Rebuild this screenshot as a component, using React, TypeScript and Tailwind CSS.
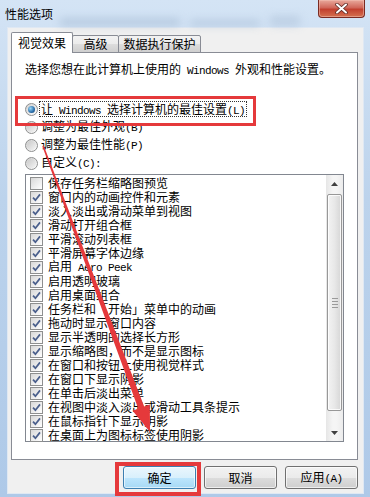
import React from "react";

const M = ({ children }: { children: React.ReactNode }) => (
  <span className="font-['Liberation_Mono',monospace] text-[11px] tracking-[-0.6px]">{children}</span>
);

const Radio = ({ checked }: { checked?: boolean }) => (
  <span className="w-[13px] h-[13px] rounded-full border border-[#8e8f8f] bg-[linear-gradient(135deg,#d0d0d0,#fdfdfd)] flex items-center justify-center shrink-0">
    {checked ? (
      <span className="w-[7px] h-[7px] rounded-full bg-[radial-gradient(circle_at_35%_35%,#9ad8f8,#2a6eaa_60%,#123a66)]" />
    ) : (
      <span className="w-[9px] h-[9px] rounded-full bg-[linear-gradient(135deg,#c9c9c9,#f4f4f4)]" />
    )}
  </span>
);

const Check = ({ checked }: { checked?: boolean }) => (
  <span className="w-[13px] h-[13px] border border-[#8e8f8f] bg-[linear-gradient(135deg,#d8d8d8,#ffffff)] shrink-0 flex items-center justify-center">
    {checked && (
      <svg width="9" height="9" viewBox="0 0 9 9">
        <path d="M1 4.6 L3.4 7.2 L8 1.4" fill="none" stroke="#4a5f8c" strokeWidth="1.7" />
      </svg>
    )}
  </span>
);

const Btn = ({ children, primary }: { children: React.ReactNode; primary?: boolean }) =>
  primary ? (
    <div className="w-[73px] h-[23px] rounded-[3px] border border-[#3c7fb1] bg-[linear-gradient(#eaf6fd,#d9f0fc_50%,#bee6fd_50%,#a7d9f5)] flex items-center justify-center text-[12px] leading-none shadow-[inset_0_0_0_1px_#ffffff99]">
      <span className="whitespace-nowrap">{children}</span>
    </div>
  ) : (
    <div className="w-[73px] h-[23px] rounded-[3px] border border-[#707070] bg-[linear-gradient(#f2f2f2,#ebebeb_50%,#dddddd_50%,#cfcfcf)] flex items-center justify-center text-[12px] leading-none shadow-[inset_0_0_0_1px_#ffffffaa]">
      <span className="whitespace-nowrap">{children}</span>
    </div>
  );

const items: { label: React.ReactNode; checked: boolean }[] = [
  { label: "保存任务栏缩略图预览", checked: false },
  { label: "窗口内的动画控件和元素", checked: true },
  { label: "淡入淡出或滑动菜单到视图", checked: true },
  { label: "滑动打开组合框", checked: true },
  { label: "平滑滚动列表框", checked: true },
  { label: "平滑屏幕字体边缘", checked: true },
  { label: <>启用<M> Aero Peek</M></>, checked: true },
  { label: "启用透明玻璃", checked: true },
  { label: "启用桌面组合", checked: true },
  { label: "任务栏和「开始」菜单中的动画", checked: true },
  { label: "拖动时显示窗口内容", checked: true },
  { label: "显示半透明的选择长方形", checked: true },
  { label: "显示缩略图，而不是显示图标", checked: true },
  { label: "在窗口和按钮上使用视觉样式", checked: true },
  { label: "在窗口下显示阴影", checked: true },
  { label: "在单击后淡出菜单", checked: true },
  { label: "在视图中淡入淡出或滑动工具条提示", checked: true },
  { label: "在鼠标指针下显示阴影", checked: true },
  { label: "在桌面上为图标标签使用阴影", checked: true },
];

export default function App() {
  return (
    <div className="w-[370px] h-[497px] relative overflow-hidden flex flex-col bg-[linear-gradient(180deg,#d4e4f5_0%,#bcd3ec_40%,#aec9e8_100%)] font-['Noto_Sans_CJK_SC',sans-serif] text-black">
      {/* blurred glass streaks */}
      <div className="absolute left-[60px] top-[18px] w-[120px] h-[8px] bg-[#8ea6c2] opacity-40 blur-[4px]" />
      <div className="absolute left-[190px] top-[20px] w-[70px] h-[6px] bg-[#8ea6c2] opacity-40 blur-[4px]" />
      <div className="absolute left-[270px] top-[16px] w-[30px] h-[10px] bg-[#9db2cc] opacity-40 blur-[4px]" />

      {/* title bar */}
      <div className="h-[28px] flex items-start justify-between relative">
        <div className="pl-[5px] pt-[5px] text-[12px] leading-[18px]">性能选项</div>
        <div className="mr-[5px] w-[47px] h-[18px] rounded-b-[4px] border border-t-0 border-[#7a2a22] bg-[linear-gradient(#e9a99c,#d0675a_45%,#c2402f_55%,#d4714f)] flex items-center justify-center shadow-[inset_0_0_0_1px_#f3c4b880]">
          <svg width="13" height="11" viewBox="0 0 13 11">
            <path d="M2 1.5 L11 9.5 M11 1.5 L2 9.5" stroke="#5b2a24" strokeWidth="3.6" strokeLinecap="round" />
            <path d="M2 1.5 L11 9.5 M11 1.5 L2 9.5" stroke="#ffffff" strokeWidth="2" strokeLinecap="round" />
          </svg>
        </div>
      </div>

      {/* client */}
      <div className="flex-1 ml-[8px] mr-[7px] mb-[4px] bg-[#f0f0f0] flex flex-col pt-[5px] pl-[3px] pr-[5px] shadow-[0_0_0_1px_#dfe8f3]">
        {/* tabs */}
        <div className="flex items-end h-[20px] relative z-10 -mb-px text-[12px]">
          <div className="w-[62px] h-[21px] bg-white border border-b-0 border-[#898c95] rounded-t-[2px] flex items-center justify-center leading-none">
            视觉效果
          </div>
          <div className="w-[47px] h-[18px] -ml-px border border-[#898c95] rounded-t-[2px] bg-[linear-gradient(#f3f3f3,#ebebeb_50%,#dddddd_50%,#cfcfcf)] flex items-center justify-center leading-none">
            高级
          </div>
          <div className="w-[83px] h-[18px] -ml-px border border-[#898c95] rounded-t-[2px] bg-[linear-gradient(#f3f3f3,#ebebeb_50%,#dddddd_50%,#cfcfcf)] flex items-center justify-center leading-none">
            数据执行保护
          </div>
        </div>

        {/* panel */}
        <div className="h-[408px] bg-white border border-[#898c95] px-[13px] pt-[8px] flex flex-col text-[12px]">
          <div className="leading-[16px] h-[16px] whitespace-nowrap">
            选择您想在此计算机上使用的<M> Windows </M>外观和性能设置。
          </div>

          <div className="mt-[23px] flex flex-col">
            <div className="h-[18px] flex items-center">
              <Radio checked />
              <span className="ml-[1px] h-[16px] px-[1px] border border-dotted border-[#333] leading-[14px] whitespace-nowrap">
                让<M> Windows </M>选择计算机的最佳设置<M>(L)</M>
              </span>
            </div>
            <div className="h-[18px] flex items-center">
              <Radio />
              <span className="ml-[3px] leading-[14px] whitespace-nowrap">
                调整为最佳外观<M>(B)</M>
              </span>
            </div>
            <div className="h-[18px] flex items-center">
              <Radio />
              <span className="ml-[3px] leading-[14px] whitespace-nowrap">
                调整为最佳性能<M>(P)</M>
              </span>
            </div>
            <div className="h-[18px] flex items-center">
              <Radio />
              <span className="ml-[3px] leading-[14px] whitespace-nowrap">
                自定义<M>(C):</M>
              </span>
            </div>
          </div>

          {/* list */}
          <div className="mt-[2px] h-[268px] border border-[#828790] bg-white flex">
            <div className="flex-1 pt-[1px] pl-[4px] flex flex-col">
              {items.map((it, i) => (
                <div key={i} className="h-[14px] flex items-center">
                  <Check checked={it.checked} />
                  <span className="ml-[5px] leading-[14px] whitespace-nowrap">{it.label}</span>
                </div>
              ))}
            </div>
            {/* scrollbar */}
            <div className="w-[17px] bg-[linear-gradient(90deg,#e6e6e6,#f5f5f5_40%,#f5f5f5_60%,#ececec)] flex flex-col">
              <div className="h-[17px] flex items-center justify-center">
                <svg width="7" height="4" viewBox="0 0 7 4">
                  <path d="M0 4 L3.5 0 L7 4 Z" fill="#404040" />
                </svg>
              </div>
              <div className="mx-[1px] mt-[2px] h-[217px] rounded-[2px] border border-[#989898] bg-[linear-gradient(90deg,#f3f3f3,#e8e8e8_50%,#d6d6d6)] flex items-center justify-center shadow-[inset_0_0_0_1px_#ffffffcc]">
                <div className="flex flex-col gap-[2px]">
                  <div className="w-[6px] h-px bg-[#9a9a9a]" />
                  <div className="w-[6px] h-px bg-[#9a9a9a]" />
                  <div className="w-[6px] h-px bg-[#9a9a9a]" />
                  <div className="w-[6px] h-px bg-[#9a9a9a]" />
                </div>
              </div>
              <div className="flex-1" />
              <div className="h-[17px] flex items-center justify-center">
                <svg width="7" height="4" viewBox="0 0 7 4">
                  <path d="M0 0 L7 0 L3.5 4 Z" fill="#404040" />
                </svg>
              </div>
            </div>
          </div>
        </div>

        {/* buttons */}
        <div className="mt-[6px] flex justify-end gap-[8px]">
          <Btn primary>确定</Btn>
          <Btn>取消</Btn>
          <Btn>
            应用<M>(A)</M>
          </Btn>
        </div>
      </div>

      {/* annotations */}
      <div className="absolute left-[15px] top-[96px] w-[241px] h-[30px] border-[3px] border-[#e5393b] pointer-events-none" />
      <div className="absolute left-[115px] top-[462px] w-[86px] h-[34px] border-[4px] border-[#e5393b] pointer-events-none" />
      <svg className="absolute left-0 top-0 pointer-events-none" width="370" height="497" viewBox="0 0 370 497">
        <polygon
          points="42.3,146.3 43.8,145.7 144.2,406.5 149.8,404.4 150,432 132.6,410.7 138.2,408.6"
          fill="#e5393b"
        />
      </svg>
    </div>
  );
}
